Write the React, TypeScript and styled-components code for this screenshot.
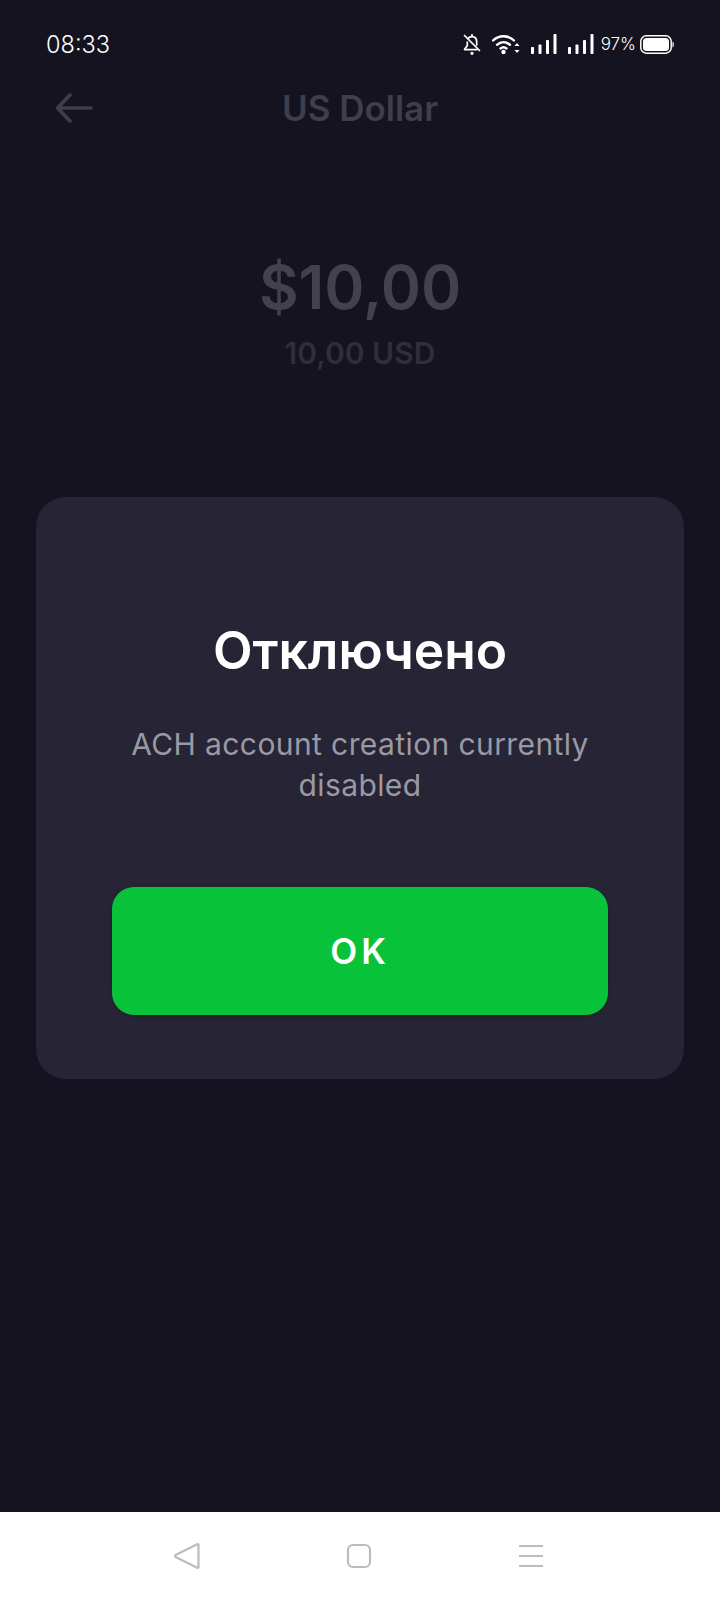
import React from 'react'
import styled, { createGlobalStyle } from 'styled-components'

const GlobalStyle = createGlobalStyle`
  html, body {
    margin: 0;
    padding: 0;
    background: #14131f;
  }
  * {
    box-sizing: border-box;
  }
`

const App = (): JSX.Element => {
  return (
    <Page>
      <GlobalStyle />
      <Screen>
        <StatusBar>
          <Clock>08:33</Clock>
          <StatusIcons>
            <BellIcon />
            <WifiIcon />
            <SignalIcon />
            <SignalIcon />
            <BatteryText>97%</BatteryText>
            <BatteryIcon />
          </StatusIcons>
        </StatusBar>
        <Header>
          <BackButton>
            <svg width="38" height="30" viewBox="0 0 38 30" fill="none" stroke="#3f3e4b" strokeWidth="3.6" strokeLinecap="round" strokeLinejoin="round">
              <path d="M36 15H3M15 2L2.500 15L15 28" />
            </svg>
          </BackButton>
          <HeaderTitle>US Dollar</HeaderTitle>
        </Header>
        <Balance>
          <Amount>$10,00</Amount>
          <SubAmount>10,00 USD</SubAmount>
        </Balance>
        <Dialog>
          <DialogTitle>Отключено</DialogTitle>
          <DialogText>ACH account creation currently disabled</DialogText>
          <OkButton>OK</OkButton>
        </Dialog>
      </Screen>
      <NavBar>
        <svg width="27" height="28" viewBox="0 0 27 28" fill="none" stroke="#bcbcbc" strokeWidth="2.200" strokeLinejoin="round">
          <path d="M24.200 2.200C25 1.800 25.500 2.200 25.500 3V25C25.500 25.800 25 26.300 24.200 25.800L3 15.200C1.800 14.500 1.800 13.500 3 12.800Z" />
        </svg>
        <svg width="26" height="26" viewBox="0 0 26 26" fill="none" stroke="#bcbcbc" strokeWidth="2.200">
          <rect x="2" y="2" width="22" height="22" rx="5" />
        </svg>
        <svg width="26" height="24" viewBox="0 0 26 24" fill="none" stroke="#bcbcbc" strokeWidth="2.200">
          <path d="M1 2H25M1 12H25M1 22H25" />
        </svg>
      </NavBar>
    </Page>
  )
}

export default App

const BellIcon = (): JSX.Element => (
  <svg width="18" height="21" viewBox="0 0 18 21" fill="none" stroke="#fff" strokeWidth="1.700" strokeLinecap="round" strokeLinejoin="round">
    <path d="M5 4.500C6 3 7.500 2.600 9 2.600C12 2.600 13.700 5 13.700 8V11" />
    <path d="M4.300 8V11.500L1.500 15.600H14" />
    <path d="M1.500 1.500L16.500 16.500" />
    <path d="M9 .8V2.200" />
    <circle cx="9" cy="19.300" r=".8" fill="#fff" />
  </svg>
)

const WifiIcon = (): JSX.Element => (
  <svg width="28" height="21" viewBox="0 0 28 21" fill="none">
    <g stroke="#fff" strokeWidth="2.400" strokeLinecap="round">
      <path d="M1 6.500C7 .8 16 .8 22 6.500" />
      <path d="M5 10.800C9 7.200 14 7.200 18 10.800" />
      <path d="M8.500 14.500C10.500 12.800 12.500 12.800 14.500 14.500" />
    </g>
    <circle cx="11.500" cy="18" r="2.200" fill="#fff" />
    <path d="M25 9L27.500 12H22.500ZM25 19L22.500 16H27.500Z" fill="#fff" />
  </svg>
)

const SignalIcon = (): JSX.Element => (
  <svg width="26" height="20" viewBox="0 0 26 20" fill="#fff">
    <rect x="0" y="13" width="3" height="7" rx=".8" />
    <rect x="7.500" y="10.500" width="3" height="9.500" rx=".8" />
    <rect x="15" y="6" width="3" height="14" rx=".8" />
    <rect x="22.500" y="0" width="3" height="20" rx=".8" />
  </svg>
)

const BatteryIcon = (): JSX.Element => (
  <svg width="34" height="19" viewBox="0 0 34 19" fill="none">
    <rect x=".8" y=".8" width="30.400" height="17.400" rx="5.500" stroke="#fff" strokeWidth="1.500" />
    <rect x="3" y="3" width="26" height="13" rx="3.500" fill="#fff" />
    <path d="M32.500 6.500C33.500 7 33.800 8 33.800 9.500C33.800 11 33.500 12 32.500 12.500Z" fill="#fff" />
  </svg>
)

const Page = styled.div`
  width: 720px;
  height: 1600px;
  display: flex;
  flex-direction: column;
  background: #14131f;
  font-family: Inter, "Noto Sans", sans-serif;
  overflow: hidden;
`

const Screen = styled.main`
  flex: 1;
  display: flex;
  flex-direction: column;
  padding-top: 28px;
`

const StatusBar = styled.div`
  height: 32px;
  display: flex;
  align-items: center;
  justify-content: space-between;
  padding: 0 46px;
`

const Clock = styled.span`
  color: #fff;
  font-size: 23.5px;
  font-weight: 300;
`

const StatusIcons = styled.div`
  display: flex;
  align-items: center;
  gap: 11px;
`

const BatteryText = styled.span`
  color: #fff;
  font-size: 17px;
  font-weight: 300;
  margin: 0 -7px 0 -4px;
`

const Header = styled.header`
  height: 50px;
  margin-top: 23px;
  position: relative;
  display: flex;
  align-items: center;
  justify-content: center;
`

const BackButton = styled.div`
  position: absolute;
  left: 55px;
  top: 10px;
  display: flex;
`

const HeaderTitle = styled.h1`
  margin: 0;
  color: #3f3e4b;
  font-size: 35px;
  font-weight: 600;
`

const Balance = styled.section`
  margin-top: 114px;
  display: flex;
  flex-direction: column;
  align-items: center;
`

const Amount = styled.div`
  color: #42414e;
  font-size: 61px;
  font-weight: 600;
  line-height: 80px;
`

const SubAmount = styled.div`
  color: #2f2e3b;
  font-size: 30px;
  font-weight: 600;
  line-height: 40px;
  margin-top: 6px;
`

const Dialog = styled.section`
  margin: 124px 36px 0;
  height: 582px;
  padding: 123px 76px 0;
  background: #272535;
  border-radius: 30px;
  display: flex;
  flex-direction: column;
  align-items: center;
`

const DialogTitle = styled.h2`
  margin: 0;
  color: #fff;
  font-size: 51.500px;
  font-weight: 600;
  line-height: 60px;
`

const DialogText = styled.p`
  margin: 44px 0 0;
  color: #9a99a4;
  font-size: 30px;
  letter-spacing: 0.4px;
  line-height: 41px;
  text-align: center;
`

const OkButton = styled.button`
  margin-top: 81px;
  width: 496px;
  height: 128px;
  flex-shrink: 0;
  border: 0;
  border-radius: 22px;
  background: #08c339;
  box-shadow: 0 1px 4px rgba(0, 0, 0, 0.2);
  color: #fff;
  font-family: inherit;
  font-size: 35px;
  font-weight: 600;
  letter-spacing: 4px;
  padding-left: 6px;
`

const NavBar = styled.nav`
  height: 88px;
  flex-shrink: 0;
  background: #fff;
  display: flex;
  align-items: center;
  padding: 0 176px 0 173px;
  justify-content: space-between;
`
